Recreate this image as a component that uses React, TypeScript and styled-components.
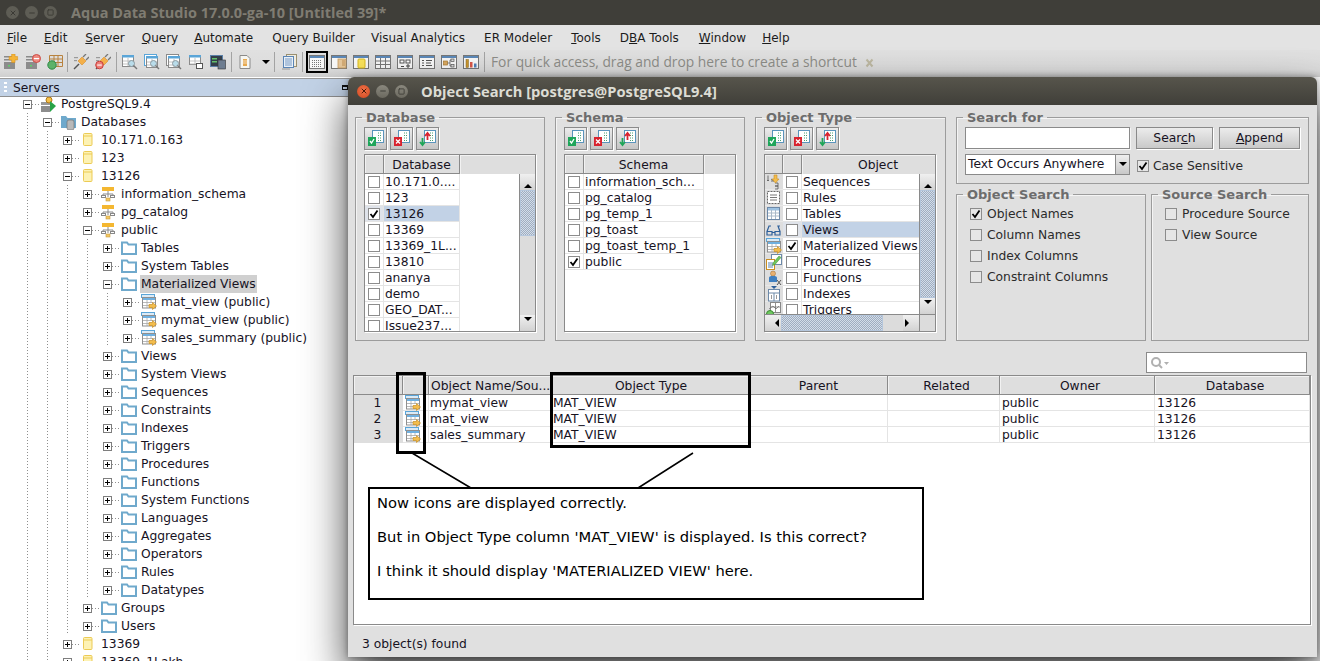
import React from "react";
import styled, { createGlobalStyle } from "styled-components";
import { X, Minus, Square } from "lucide-react";

const GlobalStyle = createGlobalStyle`
  html, body {
    margin: 0;
    padding: 0;
    width: 1320px;
    height: 664px;
    overflow: hidden;
    background: #ffffff;
    font-family: "DejaVu Sans", "Liberation Sans", sans-serif;
    font-size: 12.3px;
    color: #17131f;
  }
`;

/* ---------- main window ---------- */

const Desktop = styled.div`
  position: relative;
  width: 1320px;
  height: 661px;
  overflow: hidden;
  display: flex;
  flex-direction: column;
  background: #fff;
`;

const TitleBar = styled.div`
  height: 25px;
  flex: none;
  display: flex;
  align-items: center;
  padding-left: 6px;
  background: #3f3e39;
`;

const WinButtons = styled.div`
  display: flex;
  gap: 6px;
`;

const WinButton = styled.span<{ $red?: boolean; $dim?: boolean }>`
  width: 13px;
  height: 13px;
  border-radius: 50%;
  display: flex;
  align-items: center;
  justify-content: center;
  color: ${(p) => (p.$red ? "#4a1a0a" : p.$dim ? "#3b3a35" : "#3f3e38")};
  background: ${(p) =>
    p.$red
      ? "radial-gradient(circle at 50% 40%, #f0734a, #d1461d)"
      : p.$dim
      ? "#5e5d55"
      : "linear-gradient(#8a887e, #6b695f)"};
`;

const AppTitle = styled.div`
  margin-left: 14px;
  font-family: "Open Sans", "DejaVu Sans", sans-serif;
  font-weight: bold;
  font-size: 14.5px;
  color: #7f7c72;
  white-space: nowrap;
`;

const MenuBar = styled.div`
  height: 25px;
  flex: none;
  display: flex;
  align-items: center;
  padding-left: 7px;
  font-size: 12px;
  background: #e3e3e3;
`;

const MenuItem = styled.span<{ $gap: number }>`
  margin-right: ${(p) => p.$gap}px;
  white-space: nowrap;
  color: #1c1c1c;
`;

const Toolbar = styled.div`
  height: 27px;
  flex: none;
  box-sizing: border-box;
  padding-bottom: 3px;
  display: flex;
  align-items: center;
  background: linear-gradient(#e0e0e0, #dcdcdc 70%, #cfcfcf);
`;

const ToolItem = styled.span<{ $selected?: boolean; $width?: number }>`
  width: ${(p) => p.$width ?? 22}px;
  height: 22px;
  flex: none;
  display: flex;
  align-items: center;
  justify-content: center;
  box-sizing: border-box;
  border: ${(p) => (p.$selected ? "2px solid #000" : "none")};
`;

const ToolSep = styled.span<{ $left: number; $right: number }>`
  width: 1px;
  height: 20px;
  flex: none;
  margin: 0 ${(p) => p.$right}px 0 ${(p) => p.$left}px;
  background: #a3a3a3;
`;

const DropArrow = styled.span`
  width: 0;
  height: 0;
  margin-left: 4px;
  border-left: 4px solid transparent;
  border-right: 4px solid transparent;
  border-top: 4px solid #000;
`;

const Hint = styled.span`
  margin: -2px 0 0 6px;
  font-family: "Open Sans", "DejaVu Sans", sans-serif;
  font-size: 13.8px;
  color: #8d8d88;
  white-space: nowrap;
`;

const HintClose = styled.span`
  margin-left: 7px;
  display: flex;
  color: #b9b4a0;
`;

const ServersHeader = styled.div`
  position: relative;
  z-index: 1;
  width: 348px;
  height: 17px;
  flex: none;
  margin-top: 1px;
  display: flex;
  align-items: center;
  gap: 6px;
  padding-left: 4px;
  box-sizing: content-box;
  background: #c2d2e6;
  border-top: 1px solid #9a9a9a;
  border-bottom: 1px solid #8f8f8f;
`;

const Grip = styled.span`
  width: 3px;
  height: 12px;
  background: repeating-linear-gradient(#fff 0 2px, transparent 2px 4px);
`;

const PaneRestore = styled.span`
  margin-left: auto;
  margin-right: 4px;
  width: 6px;
  height: 5px;
  box-sizing: border-box;
  border: 1px solid #111;
  border-top-width: 2px;
`;

/* ---------- server tree ---------- */

const Tree = styled.div`
  margin-top: -2px;
  flex: 1;
  overflow: hidden;
`;

const TreeRow = styled.div`
  height: 18px;
  display: flex;
  align-items: center;
  padding-left: 23px;
  white-space: nowrap;
`;

const Guide = styled.span`
  width: 20px;
  height: 18px;
  flex: none;
  background: repeating-linear-gradient(#8f8f8f 0 1px, transparent 1px 3px) 4px 0 / 1px 100% no-repeat;
`;

const Expander = styled.span<{ $open?: boolean }>`
  position: relative;
  width: 9px;
  height: 9px;
  flex: none;
  box-sizing: border-box;
  border: 1px solid #7e7e7e;
  background: #fff;
  &::before {
    content: "";
    position: absolute;
    left: 1px;
    top: 3px;
    width: 5px;
    height: 1px;
    background: #000;
  }
  &::after {
    content: "";
    display: ${(p) => (p.$open ? "none" : "block")};
    position: absolute;
    left: 3px;
    top: 1px;
    width: 1px;
    height: 5px;
    background: #000;
  }
`;

const Connector = styled.span`
  width: 8px;
  height: 1px;
  flex: none;
  background: repeating-linear-gradient(90deg, #8f8f8f 0 1px, transparent 1px 3px);
`;

const TreeIcon = styled.span`
  width: 16px;
  height: 16px;
  flex: none;
  margin-left: 1px;
  display: flex;
`;

const TreeLabel = styled.span<{ $selected?: boolean }>`
  margin-left: 3px;
  padding: 0 1px;
  line-height: 18px;
  background: ${(p) => (p.$selected ? "#d0d0d0" : "transparent")};
`;

/* ---------- dialog ---------- */

const Dialog = styled.div`
  position: absolute;
  z-index: 2;
  left: 348px;
  top: 77px;
  width: 969px;
  height: 580px;
  display: flex;
  flex-direction: column;
  background: #e0e0e0;
  border-radius: 6px 6px 0 0;
  box-shadow: 0 22px 44px rgba(0, 0, 0, 0.75), 0 0 6px rgba(0, 0, 0, 0.35);
`;

const DialogTitle = styled.div`
  height: 28px;
  flex: none;
  display: flex;
  align-items: center;
  padding-left: 9px;
  border-radius: 6px 6px 0 0;
  background: linear-gradient(#57554c, #403f39);
`;

const DialogName = styled.div`
  margin-left: 13px;
  font-family: "Open Sans", "DejaVu Sans", sans-serif;
  font-weight: bold;
  font-size: 14.7px;
  color: #dcdcd4;
  white-space: nowrap;
`;

const TopPanels = styled.div`
  height: 231px;
  flex: none;
  margin: 5px 0 0 7px;
  display: flex;
  gap: 10px;
`;

const Group = styled.fieldset<{ $w: number; $h?: number }>`
  width: ${(p) => p.$w}px;
  height: ${(p) => p.$h ?? 231}px;
  flex: none;
  box-sizing: border-box;
  margin: 0;
  padding: 2px 8px 0;
  min-width: 0;
  border: 1px solid #9c9c9c;
  box-shadow: inset 1px 1px 0 #f4f4f4;
`;

const GroupTitle = styled.legend`
  margin-left: -2px;
  padding: 1px 4px 0;
  font-weight: bold;
  font-size: 13px;
  line-height: 14px;
  color: #6d6d6d;
`;

const ToolButtons = styled.div`
  display: flex;
  gap: 3px;
`;

const SquareButton = styled.span`
  width: 23px;
  height: 23px;
  box-sizing: border-box;
  display: flex;
  align-items: center;
  justify-content: center;
  border: 1px solid #8a8a8a;
  background: linear-gradient(#ececec, #c4c4c4);
  box-shadow: 1px 1px 0 #fff;
`;

const ListBox = styled.div`
  margin-top: 4px;
  width: 172px;
  height: 178px;
  box-sizing: border-box;
  border: 1px solid #8a8a8a;
  box-shadow: 1px 1px 0 #fff;
  background: #fff;
  overflow: hidden;
  display: flex;
  flex-direction: column;
`;

const ListHead = styled.div`
  height: 19px;
  flex: none;
  display: flex;
  overflow: hidden;
  background: #dedede;
`;

const HeadCell = styled.span<{ $w?: number; $bare?: boolean }>`
  width: ${(p) => (p.$w ? `${p.$w}px` : "auto")};
  flex: ${(p) => (p.$w ? "none" : 1)};
  box-sizing: border-box;
  text-align: center;
  line-height: 21px;
  white-space: nowrap;
  border-right: ${(p) => (p.$bare ? "none" : "1px solid #8a8a8a")};
  border-bottom: ${(p) => (p.$bare ? "none" : "1px solid #8a8a8a")};
  box-shadow: inset 1px 1px 0 #f2f2f2;
  overflow: hidden;
`;

const ListMain = styled.div`
  flex: 1;
  min-height: 0;
  display: flex;
`;

const ListRows = styled.div`
  flex: 1;
  min-width: 0;
  overflow: hidden;
`;

const ListRow = styled.div<{ $w: number }>`
  width: ${(p) => p.$w}px;
  height: 16px;
  display: flex;
`;

const CheckCell = styled.span<{ $sel?: boolean; $w?: number }>`
  width: ${(p) => p.$w ?? 19}px;
  flex: none;
  box-sizing: border-box;
  display: flex;
  align-items: center;
  justify-content: center;
  border-right: 1px solid #e4e4e4;
  border-bottom: 1px solid #e4e4e4;
  background: ${(p) => (p.$sel ? "#dfe3ea" : "#fff")};
`;

const NameCell = styled.span<{ $sel?: boolean }>`
  flex: 1;
  box-sizing: border-box;
  padding-left: 1px;
  line-height: 17px;
  white-space: nowrap;
  overflow: hidden;
  border-right: 1px solid #e4e4e4;
  border-bottom: 1px solid #e4e4e4;
  background: ${(p) => (p.$sel ? "#c2d2e6" : "#fff")};
`;

const Box = styled.span<{ $grey?: boolean }>`
  width: 12px;
  height: 12px;
  flex: none;
  box-sizing: border-box;
  display: flex;
  align-items: center;
  justify-content: center;
  border: 1px solid #8c8c8c;
  background: ${(p) => (p.$grey ? "#e6e6e6" : "#fff")};
`;

const VBar = styled.div`
  width: 15px;
  flex: none;
  display: flex;
  flex-direction: column;
  background: #dcdcdc;
  border-left: 1px solid #8a8a8a;
`;

const HBar = styled.div`
  height: 16px;
  flex: none;
  display: flex;
  background: #dcdcdc;
  border-top: 1px solid #8a8a8a;
`;

const ArrowButton = styled.span<{ $dir: "up" | "down" | "left" | "right" }>`
  width: ${(p) => (p.$dir === "left" || p.$dir === "right" ? "16px" : "auto")};
  height: ${(p) => (p.$dir === "up" || p.$dir === "down" ? "16px" : "auto")};
  flex: none;
  display: flex;
  align-items: center;
  justify-content: center;
  background: linear-gradient(#f0f0f0, #d2d2d2);
  &::before {
    content: "";
    border: 4px solid transparent;
    border-${(p) =>
      ({ up: "bottom", down: "top", left: "right", right: "left" }[p.$dir])}-color: #000;
    margin-${(p) =>
      ({ up: "bottom", down: "top", left: "right", right: "left" }[p.$dir])}: -4px;
  }
`;

const Thumb = styled.span<{ $len: number; $horizontal?: boolean }>`
  flex: none;
  width: ${(p) => (p.$horizontal ? `${p.$len}px` : "auto")};
  height: ${(p) => (p.$horizontal ? "auto" : `${p.$len}px`)};
  box-sizing: border-box;
  border: 1px solid #b4c6dc;
  background: conic-gradient(#9fadc0 25%, #d3dde9 0 50%, #9fadc0 0 75%, #d3dde9 0) 0 0 / 2px 2px;
`;

const Track = styled.span`
  flex: 1;
`;

const HSpacer = styled.span`
  flex: 1;
`;

const Corner = styled.span`
  width: 15px;
  flex: none;
  border-left: 1px solid #8a8a8a;
`;

const TypeIconCell = styled.span`
  width: 18px;
  flex: none;
  display: flex;
  align-items: center;
  justify-content: center;
  background: #dedede;
  border-bottom: 1px solid #e8e8e8;
`;

const RightColumn = styled.div`
  width: 353px;
  flex: none;
  display: flex;
  flex-direction: column;
  gap: 3px;
`;

const SearchRow = styled.div`
  display: flex;
  gap: 6px;
  height: 22px;
`;

const TextField = styled.div`
  width: 165px;
  box-sizing: border-box;
  border: 1px solid #8a8a8a;
  background: #fff;
  box-shadow: 1px 1px 0 #f5f5f5;
`;

const PushButton = styled.span<{ $w: number }>`
  width: ${(p) => p.$w}px;
  box-sizing: border-box;
  display: flex;
  align-items: center;
  justify-content: center;
  border: 1px solid #8a8a8a;
  background: linear-gradient(#ececec, #c9c9c9);
  box-shadow: 1px 1px 0 #fff;
`;

const ComboRow = styled.div`
  margin-top: 5px;
  display: flex;
  align-items: center;
  height: 21px;
`;

const Combo = styled.div`
  width: 165px;
  height: 21px;
  box-sizing: border-box;
  display: flex;
  align-items: center;
  border: 1px solid #8a8a8a;
  background: #fff;
`;

const ComboText = styled.span`
  flex: 1;
  padding-left: 2px;
  line-height: 19px;
  white-space: nowrap;
`;

const ComboArrow = styled.span`
  width: 13px;
  align-self: stretch;
  display: flex;
  align-items: center;
  justify-content: center;
  border-left: 1px solid #8a8a8a;
  background: linear-gradient(#eee, #c8c8c8);
  &::before {
    content: "";
    margin-top: 3px;
    border: 4px solid transparent;
    border-top-color: #000;
  }
`;

const CaseCheck = styled.label`
  margin-left: 7px;
  display: flex;
  align-items: center;
  gap: 4px;
  padding-top: 2px;
  color: #2b2b2b;
`;

const OptionRows = styled.div`
  margin-top: -1px;
  padding-left: 5px;
`;

const Option = styled.div`
  height: 21px;
  display: flex;
  align-items: center;
  gap: 5px;
  color: #2b2b2b;
  white-space: nowrap;
`;

const OptionGroups = styled.div`
  display: flex;
  gap: 5px;
`;

const FilterBar = styled.div`
  height: 21px;
  flex: none;
  margin-top: 11px;
  margin-right: 10px;
  display: flex;
  justify-content: flex-end;
`;

const FilterField = styled.div`
  width: 161px;
  box-sizing: border-box;
  display: flex;
  align-items: center;
  padding-left: 3px;
  border: 1px solid #8a8a8a;
  background: #fff;
`;

const ResultsTable = styled.div`
  height: 250px;
  flex: none;
  margin: 2px 6px 0 5px;
  box-sizing: border-box;
  border: 1px solid #8a8a8a;
  box-shadow: 1px 1px 0 #fff;
  background: #fff;
`;

const ResultGrid = styled.div`
  display: grid;
  grid-template-columns: 49px 26px 122px 199px 138px 112px 155px 155px;
  grid-auto-rows: 16px;
`;

const ResultHead = styled(ResultGrid)`
  grid-auto-rows: 19px;
  background: #dedede;
`;

const ResultHeadCell = styled.span<{ $left?: boolean; $nudge?: number }>`
  box-sizing: border-box;
  text-align: ${(p) => (p.$left ? "left" : "center")};
  padding-left: ${(p) => (p.$left ? 2 : p.$nudge ?? 0)}px;
  line-height: 21px;
  white-space: nowrap;
  overflow: hidden;
  border-right: 1px solid #8a8a8a;
  border-bottom: 1px solid #8a8a8a;
  box-shadow: inset 1px 1px 0 #f2f2f2;
`;

const ResultCell = styled.span<{ $tight?: boolean }>`
  box-sizing: border-box;
  padding-left: ${(p) => (p.$tight ? "1px" : "2px")};
  line-height: 17px;
  white-space: nowrap;
  border-right: 1px solid #e4e4e4;
  border-bottom: 1px solid #e4e4e4;
`;

const RowNumber = styled.span`
  text-align: center;
  line-height: 17px;
  padding-right: 2px;
  background: #dedede;
`;

const ResultIcon = styled.span`
  display: flex;
  align-items: center;
  justify-content: center;
  padding-right: 5px;
  border-right: 1px solid #e4e4e4;
  border-bottom: 1px solid #e4e4e4;
`;

const StatusBar = styled.div`
  flex: 1;
  display: flex;
  align-items: center;
  padding: 6px 0 0 14px;
`;

/* ---------- annotations pasted over the dialog ---------- */

const Callout = styled.div<{ $l: number; $t: number; $w: number; $h: number }>`
  position: absolute;
  left: ${(p) => p.$l}px;
  top: ${(p) => p.$t}px;
  width: ${(p) => p.$w}px;
  height: ${(p) => p.$h}px;
  box-sizing: border-box;
  border: 3px solid #000;
`;

const Note = styled.div`
  position: absolute;
  left: 20px;
  top: 410px;
  width: 556px;
  height: 113px;
  box-sizing: border-box;
  padding: 4px 7px;
  border: 2px solid #000;
  background: #fff;
  font-size: 14.7px;
  color: #000;
`;

const NoteLine = styled.p`
  margin: 0 0 14px;
  line-height: 20px;
  white-space: nowrap;
`;

const Leaders = styled.svg`
  position: absolute;
  left: 0;
  top: 0;
  pointer-events: none;
`;

/* ---------- icons ---------- */

const Svg: React.FC<{ size?: number; children: React.ReactNode }> = ({ size = 16, children }) => (
  <svg width={size} height={size} viewBox="0 0 16 16" fill="none">
    {children}
  </svg>
);

const ServerBase = () => (
  <>
    <rect x="1" y="2" width="9" height="1.5" fill="#8a8a8a" />
    <rect x="1" y="5" width="9" height="1.5" fill="#8a8a8a" />
    <rect x="1" y="8" width="11" height="7" fill="#8c8c8c" />
    <rect x="5" y="11" width="2" height="1.5" fill="#5fd06a" />
  </>
);

const ServerPlus = () => (
  <Svg>
    <ServerBase />
    <path d="M9 0h4v3h3v4h-3v3H9V7H6V3h3z" transform="translate(1 0) scale(.85)" fill="#f5b437" stroke="#d08a1a" strokeWidth=".6" />
  </Svg>
);

const ServerMinus = () => (
  <Svg>
    <ServerBase />
    <circle cx="11.5" cy="4.5" r="4" fill="#ee8a80" stroke="#cc4a44" />
    <rect x="9" y="4" width="5" height="1.2" fill="#fff" />
  </Svg>
);

const GridGreen = () => (
  <Svg>
    <path d="M2.5 1.5h13v11h-13zM2.5 5h13M2.5 8.500h13M7 1.500v11M11 1.500v11" stroke="#b8823e" />
    <circle cx="5" cy="11" r="4.200" fill="#5cb26a" stroke="#2d8a46" />
  </Svg>
);

const Plug: React.FC<{ minus?: boolean }> = ({ minus }) => (
  <Svg>
    <path d="M1 15l5-5" stroke="#555" strokeWidth="1.400" />
    <path d="M5 7l4-4 4 4-4 4z" fill="#f4b04a" stroke="#d88e2a" strokeWidth=".6" />
    <path d="M10 3l3-3M13 6l3-3" stroke="#777" strokeWidth="1.300" />
    <rect x="1" y="3" width="4" height="1.200" fill="#9a9a9a" />
    <rect x="1" y="6" width="3" height="1.200" fill="#9a9a9a" />
    {minus && (
      <>
        <circle cx="4.500" cy="11" r="3.800" fill="#ee7f78" stroke="#c73d3a" />
        <rect x="2.200" y="10.500" width="4.600" height="1.100" fill="#fff" />
      </>
    )}
  </Svg>
);

const TableBase: React.FC<{ x?: number; y?: number; w?: number; h?: number }> = ({ x = 1, y = 2, w = 13, h = 12 }) => (
  <>
    <rect x={x + 0.5} y={y + 0.5} width={w - 1} height={h - 1} fill="#fff" stroke="#8a8a8a" />
    <rect x={x} y={y} width={w} height="2.500" fill="#5aa5d8" />
    <path
      d={`M${x + 1} ${y + 6}h${w - 2}M${x + 1} ${y + 9}h${w - 2}M${x + w / 2} ${y + 3}v${h - 4}`}
      stroke="#b4b4b4"
      strokeWidth=".8"
    />
  </>
);

const TableSearch: React.FC<{ stacked?: boolean; grey?: boolean }> = ({ stacked, grey }) => (
  <Svg>
    {stacked && <rect x="0.500" y="0.500" width="12" height="11" fill="#fff" stroke={grey ? "#8a8a8a" : "#5aa5d8"} />}
    <TableBase x={stacked ? 2 : 0} y={stacked ? 2 : 1} w={12} h={12} />
    <circle cx="9.500" cy="9.500" r="3" fill="#b9dcea" stroke="#8d9aa0" />
    <path d="M11.500 11.500l3.500 3.500" stroke="#777" strokeWidth="1.400" />
  </Svg>
);

const TableCopy = () => (
  <Svg>
    <TableBase x={1} y={1} w={12} h={10} />
    <rect x="8.500" y="9.500" width="6" height="5" fill="#fff" stroke="#555" />
  </Svg>
);

const DarkPanel = () => (
  <Svg>
    <rect x="0.500" y="1.500" width="12" height="11" fill="#333e4a" stroke="#5a7fa8" />
    <rect x="2" y="4" width="5" height="1.500" fill="#63c06c" />
    <rect x="2" y="7" width="5" height="1.500" fill="#63c06c" />
    <rect x="8" y="6" width="7.500" height="9" fill="#6e7d90" stroke="#333" strokeWidth=".6" />
  </Svg>
);

const Doc = () => (
  <Svg>
    <path d="M3 1.500h7l3 3v10H3z" fill="#f6f6f2" stroke="#8a8a8a" />
    <rect x="6" y="5" width="4" height="7" fill="#e7a94f" />
    <path d="M6 7h4M6 9h4" stroke="#fff" strokeWidth=".6" />
  </Svg>
);

const Scroll = () => (
  <Svg>
    <rect x="5.500" y="0.500" width="10" height="12" fill="#f0ece0" stroke="#9a8f6f" />
    <rect x="2.500" y="2.500" width="10" height="11" fill="#e8f0f8" stroke="#5a84b4" />
    <path d="M4 5h7M4 7h7M4 9h7M4 11h7" stroke="#5a84b4" strokeWidth=".8" />
    <path d="M1 15h8" stroke="#999" />
  </Svg>
);

const ViewFrame: React.FC<{ children?: React.ReactNode }> = ({ children }) => (
  <Svg>
    <rect x="0.500" y="1.500" width="15" height="13" fill="#f8f8f8" stroke="#777" />
    <rect x="1" y="2" width="14" height="2" fill="#5b88b8" />
    {children}
  </Svg>
);

const ViewPanel = () => (
  <ViewFrame>
    <rect x="7" y="5" width="8" height="9" fill="#e6c79a" stroke="#c39a60" strokeWidth=".8" />
    <path d="M11 7h3M11 9h3M11 11h3" stroke="#b07a30" strokeWidth=".7" />
  </ViewFrame>
);

const ViewYellow = () => (
  <ViewFrame>
    <rect x="5" y="5" width="7" height="9" rx="1" fill="#f9e25a" stroke="#d8b820" />
  </ViewFrame>
);

const ViewGrid = () => (
  <ViewFrame>
    <path d="M1 7h14M1 10.500h14M5.500 4v10M10.500 4v10" stroke="#777" />
  </ViewFrame>
);

const ViewDots = () => (
  <ViewFrame>
    <path d="M3 6.500h10M3 8.500h10M3 10.500h10M3 12.500h10" stroke="#777" strokeDasharray="1 1" />
  </ViewFrame>
);

const ViewDiagram = () => (
  <ViewFrame>
    <rect x="3" y="6" width="4" height="3" fill="#fff" stroke="#555" />
    <rect x="9" y="6" width="4" height="3" fill="#fff" stroke="#555" />
    <path d="M4 12.500h3M9 12h4M11 10v4" stroke="#444" />
  </ViewFrame>
);

const ViewList = () => (
  <ViewFrame>
    <path d="M3 6.500h2M7 6.500h6M3 9h2M7 9h5M3 11.500h2M7 11.500h6" stroke="#555" />
  </ViewFrame>
);

const ViewTree = () => (
  <ViewFrame>
    <rect x="2.500" y="7" width="4" height="4" fill="#d8a860" stroke="#a87a30" strokeWidth=".7" />
    <rect x="10" y="5" width="3" height="2.500" fill="#ddd" stroke="#555" strokeWidth=".7" />
    <rect x="10" y="10.500" width="3" height="2.500" fill="#ddd" stroke="#555" strokeWidth=".7" />
    <path d="M6.500 9H9M9 6v6M9 6h1M9 12h1" stroke="#555" strokeWidth=".7" />
  </ViewFrame>
);

const ViewBars = () => (
  <ViewFrame>
    <rect x="3" y="5.500" width="2.500" height="8" fill="#c9962e" stroke="#8a6a20" strokeWidth=".5" />
    <rect x="7" y="8" width="2.500" height="5.500" fill="#d8574a" />
    <rect x="11" y="9.500" width="2.500" height="4" fill="#4f80b8" />
  </ViewFrame>
);

const Cross = () => (
  <svg width="11" height="11" viewBox="0 0 11 11" fill="none">
    <path d="M2.500 2.500l6 7M8.500 2.500l-6 7" stroke="#bdb8a2" strokeWidth="2" />
  </svg>
);

const ServerNode = () => (
  <Svg>
    <rect x="0" y="6" width="9" height="3" fill="#9a9a9a" />
    <rect x="0" y="10" width="9" height="6" fill="#8d8d8d" />
    <circle cx="8" cy="4" r="3" fill="#f5c04a" stroke="#b07a18" />
    <path d="M9 5l6 5-6 6z" fill="#27a347" />
  </Svg>
);

const FolderShape = () => (
  <path d="M1 14V2.500h5l1.500 2H15V14z" fill="#fff" stroke="#6fa9cc" strokeWidth="2" />
);

const Folder = () => <Svg><FolderShape /></Svg>;

const DbFolder = () => (
  <Svg>
    <path d="M0 14V2h5l1.500 2H15v10z" fill="#6fa9cc" />
    <rect x="6" y="6" width="7" height="10" rx="2" fill="#b9b9b9" stroke="#757575" strokeWidth=".7" />
  </Svg>
);

const DbNode = () => (
  <Svg>
    <rect x="2.500" y="1.500" width="8.500" height="12" rx="1" fill="#fdf2b4" stroke="#eccb55" />
    <path d="M3 4h8" stroke="#eccb55" />
  </Svg>
);

const SchemaNode = () => (
  <Svg>
    <rect x="1" y="1" width="12" height="4" fill="#f4b731" />
    <path d="M7 5v6M2 8h10M2 8v2M12 8v2" stroke="#8a8a8a" />
    <rect x="0.500" y="9.500" width="4" height="2" fill="#fff" stroke="#888" />
    <rect x="9.500" y="9.500" width="4" height="2" fill="#fff" stroke="#888" />
    <rect x="5" y="12" width="4" height="3" fill="#f4c760" stroke="#c39a40" strokeWidth=".6" />
  </Svg>
);

const MatView = () => (
  <Svg>
    <rect x="0.500" y="0.500" width="13" height="3" fill="#dbeaf6" stroke="#5aa5d8" />
    <rect x="1.500" y="3.500" width="13" height="10.500" fill="#fff" stroke="#8f8f8f" />
    <rect x="2" y="4" width="12" height="2" fill="#6fb0e0" />
    <path d="M2 8.500h12M2 11.500h7M6 6v8M10 6v3" stroke="#a8a8a8" strokeWidth=".8" />
    <path d="M8 10.500h3.500V8.500l4 3.500-4 3.500v-2H8z" fill="#f3bd4d" stroke="#c98f22" strokeWidth=".7" />
  </Svg>
);

const Numbers = () => (
  <Svg>
    <path d="M1 6.500h2M2 6.500V1.500M5 7h3M5 5l3 2M9 9h3v3H9M9 12h3v3H9" stroke="#555" strokeWidth=".8" />
    <path d="M8 5V1h3v4h2l-3.500 4L6 5z" fill="#f3bd4d" stroke="#c98f22" strokeWidth=".6" />
  </Svg>
);

const Rules = () => (
  <Svg>
    <rect x="1.500" y="1.500" width="12" height="12" fill="#fff" stroke="#666" strokeDasharray="2 1" />
    <path d="M4 5h7M4 7.500h7M4 10h7" stroke="#777" />
  </Svg>
);

const TablesIcon = () => (
  <Svg>
    <rect x="1.500" y="1.500" width="12" height="12" fill="#fff" stroke="#6d89a8" />
    <rect x="2" y="2" width="11" height="2.500" fill="#9dc2e2" />
    <path d="M2 7h11M2 10h11M5.500 4v9M9.500 4v9" stroke="#a9b9c8" />
  </Svg>
);

const Glasses = () => (
  <Svg>
    <path d="M1 13V9.500h5V13zM9 13V9.500h5V13zM6 10.500h3M1 9.500L3 4h2M14 9.500L12 4h2" stroke="#2d5f9a" strokeWidth="1.200" />
  </Svg>
);

const Procedures = () => (
  <Svg>
    <rect x="5.500" y="0.500" width="10" height="10" fill="#fff" stroke="#6d89a8" />
    <rect x="0.500" y="5.500" width="8" height="10" fill="#fff" stroke="#c98f22" />
    <path d="M2 9h5M2 11h5M2 13h5" stroke="#5a84b4" />
    <path d="M7 9l6-7 2 1.500-6 7-2.500 1z" fill="#6fc860" stroke="#3a8a30" strokeWidth=".5" />
  </Svg>
);

const Functions = () => (
  <Svg>
    <circle cx="7" cy="3.500" r="2.500" fill="#e8b070" stroke="#9a6a30" strokeWidth=".5" />
    <path d="M3 12V8c0-1.500 1-2 4-2s4 .5 4 2v4z" fill="#3f7fc0" />
    <path d="M11 10l4 5M15 10l-4 5" stroke="#555" />
  </Svg>
);

const Indexes = () => (
  <Svg>
    <rect x="2.500" y="3.500" width="11" height="11.500" fill="#fff" stroke="#6d89a8" />
    <path d="M3 7h10M8 7v8" stroke="#6d89a8" />
    <path d="M5 0h6L8 3z" fill="#2d5f9a" />
    <path d="M5 10h1M5 12h1M10 10h1M10 12h1" stroke="#333" />
  </Svg>
);

const Triggers = () => (
  <Svg>
    <rect x="4.500" y="0.500" width="10" height="10" fill="#fff" stroke="#888" />
    <path d="M5 5h9M9.500 1v9M3 7l4-3 3 3 3-3" stroke="#666" strokeWidth=".7" />
    <circle cx="4" cy="12" r="3.500" fill="#6fc860" stroke="#3a8a30" />
  </Svg>
);

const ListAction: React.FC<{ kind: "check" | "clear" | "invert" }> = ({ kind }) => (
  <svg width="17" height="17" viewBox="0 0 17 17" fill="none">
    <rect x="5.500" y="0.500" width="11" height="12" fill="#fff" stroke="#5a94bc" />
    <path d="M11 3h4M11 5.500h4M11 8h4M11 10.500h4" stroke="#4aa070" strokeDasharray="1 1" />
    {kind === "check" && (
      <>
        <rect x="1" y="7" width="8" height="9" fill="#1fa55a" />
        <path d="M3 11l1.500 2L7 9" stroke="#fff" strokeWidth="1.300" />
      </>
    )}
    {kind === "clear" && (
      <>
        <rect x="1" y="7" width="8" height="9" fill="#d8232f" />
        <path d="M3 9.500l4 4M7 9.500l-4 4" stroke="#fff" strokeWidth="1.300" />
      </>
    )}
    {kind === "invert" && (
      <>
        <path d="M3.500 8v6M1 12l2.500 3L6 12" stroke="#1fa55a" strokeWidth="1.800" />
        <path d="M8.500 10V4M6 6l2.500-3L11 6" stroke="#d8232f" strokeWidth="1.800" />
      </>
    )}
  </svg>
);

const Tick = () => (
  <svg width="10" height="10" viewBox="0 0 10 10" fill="none">
    <path d="M1.500 5l2.500 3L8.500 1.500" stroke="#000" strokeWidth="1.800" />
  </svg>
);

const SearchGlyph = () => (
  <svg width="20" height="14" viewBox="0 0 20 14" fill="none">
    <circle cx="6" cy="6" r="4" stroke="#b0b0b0" strokeWidth="2" />
    <path d="M9 9l3 3" stroke="#b0b0b0" strokeWidth="2" />
    <path d="M14 6h5l-2.500 3z" fill="#b0b0b0" />
  </svg>
);

/* ---------- data ---------- */

type TreeEntry = { level: number; open?: boolean; icon: React.FC; label: string; selected?: boolean };

const folderLabels = ["Views", "System Views", "Sequences", "Constraints", "Indexes", "Triggers", "Procedures", "Functions", "System Functions", "Languages", "Aggregates", "Operators", "Rules", "Datatypes"];

const treeEntries: TreeEntry[] = [
  { level: 0, open: true, icon: ServerNode, label: "PostgreSQL9.4" },
  { level: 1, open: true, icon: DbFolder, label: "Databases" },
  { level: 2, icon: DbNode, label: "10.171.0.163" },
  { level: 2, icon: DbNode, label: "123" },
  { level: 2, open: true, icon: DbNode, label: "13126" },
  { level: 3, icon: SchemaNode, label: "information_schema" },
  { level: 3, icon: SchemaNode, label: "pg_catalog" },
  { level: 3, open: true, icon: SchemaNode, label: "public" },
  { level: 4, icon: Folder, label: "Tables" },
  { level: 4, icon: Folder, label: "System Tables" },
  { level: 4, open: true, icon: Folder, label: "Materialized Views", selected: true },
  { level: 5, icon: MatView, label: "mat_view (public)" },
  { level: 5, icon: MatView, label: "mymat_view (public)" },
  { level: 5, icon: MatView, label: "sales_summary (public)" },
  ...folderLabels.map((label) => ({ level: 4, icon: Folder, label })),
  { level: 3, icon: Folder, label: "Groups" },
  { level: 3, icon: Folder, label: "Users" },
  { level: 2, icon: DbNode, label: "13369" },
  { level: 2, icon: DbNode, label: "13369_1Lakh" },
];

const databases = ["10.171.0....", "123", "13126", "13369", "13369_1L...", "13810", "ananya", "demo", "GEO_DAT...", "Issue237..."];
const schemas = ["information_sch...", "pg_catalog", "pg_temp_1", "pg_toast", "pg_toast_temp_1", "public"];

const objectTypes: { name: string; icon: React.FC; checked?: boolean; sel?: boolean }[] = [
  { name: "Sequences", icon: Numbers },
  { name: "Rules", icon: Rules },
  { name: "Tables", icon: TablesIcon },
  { name: "Views", icon: Glasses, sel: true },
  { name: "Materialized Views", icon: MatView, checked: true },
  { name: "Procedures", icon: Procedures },
  { name: "Functions", icon: Functions },
  { name: "Indexes", icon: Indexes },
  { name: "Triggers", icon: Triggers },
];

const results = [
  { n: 1, name: "mymat_view" },
  { n: 2, name: "mat_view" },
  { n: 3, name: "sales_summary" },
];

const ListActions = () => (
  <ToolButtons>
    <SquareButton><ListAction kind="check" /></SquareButton>
    <SquareButton><ListAction kind="clear" /></SquareButton>
    <SquareButton><ListAction kind="invert" /></SquareButton>
  </ToolButtons>
);

const ScrollUpDown: React.FC<{ thumb: number }> = ({ thumb }) => (
  <VBar>
    <ArrowButton $dir="up" />
    <Thumb $len={thumb} />
    <Track />
    <ArrowButton $dir="down" />
  </VBar>
);

export default function App() {
  return (
    <>
      <GlobalStyle />
      <Desktop>
        <TitleBar>
          <WinButtons>
            <WinButton $dim><X size={8} strokeWidth={3} /></WinButton>
            <WinButton $dim><Minus size={8} strokeWidth={3} /></WinButton>
            <WinButton $dim><Square size={7} strokeWidth={3} /></WinButton>
          </WinButtons>
          <AppTitle>Aqua Data Studio 17.0.0-ga-10 [Untitled 39]*</AppTitle>
        </TitleBar>

        <MenuBar>
          <MenuItem $gap={17}><u>F</u>ile</MenuItem>
          <MenuItem $gap={18}><u>E</u>dit</MenuItem>
          <MenuItem $gap={17}><u>S</u>erver</MenuItem>
          <MenuItem $gap={16}><u>Q</u>uery</MenuItem>
          <MenuItem $gap={19}><u>A</u>utomate</MenuItem>
          <MenuItem $gap={16}>Query Builder</MenuItem>
          <MenuItem $gap={19}>Visual Analytics</MenuItem>
          <MenuItem $gap={19}>ER Modeler</MenuItem>
          <MenuItem $gap={19}><u>T</u>ools</MenuItem>
          <MenuItem $gap={20}>D<u>B</u>A Tools</MenuItem>
          <MenuItem $gap={16}><u>W</u>indow</MenuItem>
          <MenuItem $gap={15}><u>H</u>elp</MenuItem>
        </MenuBar>

        <Toolbar>
          <ToolItem><ServerPlus /></ToolItem>
          <ToolItem><ServerMinus /></ToolItem>
          <ToolItem><GridGreen /></ToolItem>
          <ToolSep $left={1} $right={2} />
          <ToolItem><Plug /></ToolItem>
          <ToolItem><Plug minus /></ToolItem>
          <ToolSep $left={2} $right={2} />
          <ToolItem><TableSearch /></ToolItem>
          <ToolItem><TableSearch stacked /></ToolItem>
          <ToolItem><TableSearch stacked grey /></ToolItem>
          <ToolItem><TableCopy /></ToolItem>
          <ToolItem><DarkPanel /></ToolItem>
          <ToolSep $left={2} $right={2} />
          <ToolItem><Doc /></ToolItem>
          <ToolItem $width={16}><DropArrow /></ToolItem>
          <ToolSep $left={2} $right={3} />
          <ToolItem><Scroll /></ToolItem>
          <ToolSep $left={2} $right={3} />
          <ToolItem $selected><ViewDots /></ToolItem>
          <ToolItem><ViewPanel /></ToolItem>
          <ToolItem><ViewYellow /></ToolItem>
          <ToolItem><ViewGrid /></ToolItem>
          <ToolItem><ViewDiagram /></ToolItem>
          <ToolItem><ViewList /></ToolItem>
          <ToolItem><ViewTree /></ToolItem>
          <ToolItem><ViewBars /></ToolItem>
          <ToolSep $left={2} $right={0} />
          <Hint>For quick access, drag and drop here to create a shortcut</Hint>
          <HintClose><Cross /></HintClose>
        </Toolbar>

        <ServersHeader>
          <Grip />
          <span>Servers</span>
          <PaneRestore />
        </ServersHeader>

        <Tree>
          {treeEntries.map((entry, i) => {
            const Icon = entry.icon;
            return (
              <TreeRow key={i}>
                {Array.from({ length: entry.level }, (_, g) => <Guide key={g} />)}
                <Expander $open={entry.open} />
                <Connector />
                <TreeIcon><Icon /></TreeIcon>
                <TreeLabel $selected={entry.selected}>{entry.label}</TreeLabel>
              </TreeRow>
            );
          })}
        </Tree>

        <Dialog>
          <DialogTitle>
            <WinButtons>
              <WinButton $red><X size={8} strokeWidth={3} /></WinButton>
              <WinButton><Minus size={8} strokeWidth={3} /></WinButton>
              <WinButton><Square size={7} strokeWidth={3} /></WinButton>
            </WinButtons>
            <DialogName>Object Search [postgres@PostgreSQL9.4]</DialogName>
          </DialogTitle>

          <TopPanels>
            <Group $w={190}>
              <GroupTitle>Database</GroupTitle>
              <ListActions />
              <ListBox>
                <ListHead>
                  <HeadCell $w={19} />
                  <HeadCell $w={76}>Database</HeadCell>
                  <HeadCell $bare />
                </ListHead>
                <ListMain>
                  <ListRows>
                    {databases.map((d) => (
                      <ListRow key={d} $w={95}>
                        <CheckCell $sel={d === "13126"}><Box>{d === "13126" && <Tick />}</Box></CheckCell>
                        <NameCell $sel={d === "13126"}>{d}</NameCell>
                      </ListRow>
                    ))}
                  </ListRows>
                  <ScrollUpDown thumb={46} />
                </ListMain>
              </ListBox>
            </Group>

            <Group $w={190}>
              <GroupTitle>Schema</GroupTitle>
              <ListActions />
              <ListBox>
                <ListHead>
                  <HeadCell $w={19} />
                  <HeadCell $w={120}>Schema</HeadCell>
                  <HeadCell $bare />
                </ListHead>
                <ListRows>
                  {schemas.map((s) => (
                    <ListRow key={s} $w={139}>
                      <CheckCell><Box>{s === "public" && <Tick />}</Box></CheckCell>
                      <NameCell>{s}</NameCell>
                    </ListRow>
                  ))}
                </ListRows>
              </ListBox>
            </Group>

            <Group $w={191}>
              <GroupTitle>Object Type</GroupTitle>
              <ListActions />
              <ListBox>
                <ListHead>
                  <HeadCell $w={18} />
                  <HeadCell $w={19} />
                  <HeadCell $w={152} $bare>Object</HeadCell>
                </ListHead>
                <ListMain>
                  <ListRows>
                    {objectTypes.map((o) => {
                      const Icon = o.icon;
                      return (
                        <ListRow key={o.name} $w={156}>
                          <TypeIconCell><Icon /></TypeIconCell>
                          <CheckCell $sel={o.sel}><Box>{o.checked && <Tick />}</Box></CheckCell>
                          <NameCell $sel={o.sel}>{o.name}</NameCell>
                        </ListRow>
                      );
                    })}
                  </ListRows>
                  <ScrollUpDown thumb={108} />
                </ListMain>
                <HBar>
                  <ArrowButton $dir="left" />
                  <Thumb $len={102} $horizontal />
                  <HSpacer />
                  <ArrowButton $dir="right" />
                  <Corner />
                </HBar>
              </ListBox>
            </Group>

            <RightColumn>
              <Group $w={353} $h={74}>
                <GroupTitle>Search for</GroupTitle>
                <SearchRow>
                  <TextField />
                  <PushButton $w={77}><span>Sear<u>c</u>h</span></PushButton>
                  <PushButton $w={81}><span><u>A</u>ppend</span></PushButton>
                </SearchRow>
                <ComboRow>
                  <Combo>
                    <ComboText>Text Occurs Anywhere</ComboText>
                    <ComboArrow />
                  </Combo>
                  <CaseCheck><Box $grey><Tick /></Box>Case Sensitive</CaseCheck>
                </ComboRow>
              </Group>
              <OptionGroups>
                <Group $w={190} $h={154}>
                  <GroupTitle>Object Search</GroupTitle>
                  <OptionRows>
                    <Option><Box $grey><Tick /></Box>Object Names</Option>
                    <Option><Box $grey />Column Names</Option>
                    <Option><Box $grey />Index Columns</Option>
                    <Option><Box $grey />Constraint Columns</Option>
                  </OptionRows>
                </Group>
                <Group $w={158} $h={154}>
                  <GroupTitle>Source Search</GroupTitle>
                  <OptionRows>
                    <Option><Box $grey />Procedure Source</Option>
                    <Option><Box $grey />View Source</Option>
                  </OptionRows>
                </Group>
              </OptionGroups>
            </RightColumn>
          </TopPanels>

          <FilterBar>
            <FilterField><SearchGlyph /></FilterField>
          </FilterBar>

          <ResultsTable>
            <ResultHead>
              <ResultHeadCell />
              <ResultHeadCell />
              <ResultHeadCell $left>Object Name/Sou...</ResultHeadCell>
              <ResultHeadCell $nudge={2}>Object Type</ResultHeadCell>
              <ResultHeadCell>Parent</ResultHeadCell>
              <ResultHeadCell $nudge={6}>Related</ResultHeadCell>
              <ResultHeadCell $nudge={6}>Owner</ResultHeadCell>
              <ResultHeadCell $nudge={6}>Database</ResultHeadCell>
            </ResultHead>
            {results.map((r) => (
              <ResultGrid key={r.n}>
                <RowNumber>{r.n}</RowNumber>
                <ResultIcon><MatView /></ResultIcon>
                <ResultCell $tight>{r.name}</ResultCell>
                <ResultCell>MAT_VIEW</ResultCell>
                <ResultCell />
                <ResultCell />
                <ResultCell>public</ResultCell>
                <ResultCell>13126</ResultCell>
              </ResultGrid>
            ))}
          </ResultsTable>

          <StatusBar>3 object(s) found</StatusBar>

          <Callout $l={48} $t={295} $w={30} $h={82} />
          <Callout $l={202} $t={295} $w={201} $h={76} />
          <Leaders width={969} height={580}>
            <path d="M64 376L123 411M345 376L290 411" stroke="#000" strokeWidth="1.500" />
          </Leaders>
          <Note>
            <NoteLine>Now icons are displayed correctly.</NoteLine>
            <NoteLine>But in Object Type column 'MAT_VIEW' is displayed. Is this correct?</NoteLine>
            <NoteLine>I think it should display 'MATERIALIZED VIEW' here.</NoteLine>
          </Note>
        </Dialog>
      </Desktop>
    </>
  );
}
